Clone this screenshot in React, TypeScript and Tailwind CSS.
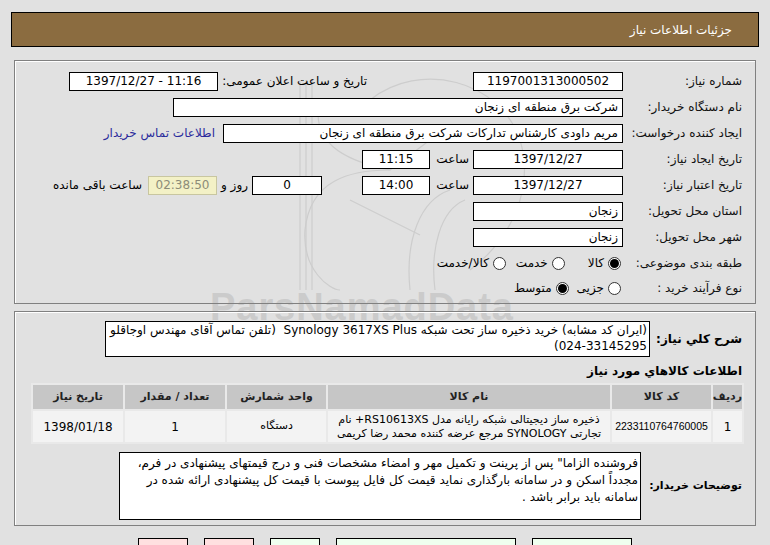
import React from 'react';

const font = "font-['Tahoma','DejaVu_Sans',sans-serif]";

const Box = ({ children, className = '' }: { children?: React.ReactNode; className?: string }) => (
  <div className={`h-[19px] border border-black bg-white flex items-center px-1 text-[12px] text-black leading-none ${className}`}>
    {children}
  </div>
);

const Label = ({ children, className = '' }: { children: React.ReactNode; className?: string }) => (
  <div className={`w-[119px] shrink-0 whitespace-nowrap text-[12px] text-[#111] ${className}`}>{children}</div>
);

const Radio = ({ checked }: { checked?: boolean }) => (
  <span className="w-[13px] h-[13px] rounded-full border border-[#333] bg-white flex items-center justify-center shrink-0">
    {checked && <span className="w-[9px] h-[9px] rounded-full bg-black" />}
  </span>
);

// faint logo watermark drawn over the page
const Watermark = () => (
  <div aria-hidden className="absolute inset-0 pointer-events-none select-none">
    <svg className="absolute left-[190px] top-[40px]" width="400" height="300" viewBox="0 0 400 300" fill="none" stroke="#cdcdcd" strokeWidth="1.2">
      <path d="M110 40 L110 250 M116 40 L116 250 M122 40 L122 250" />
      <path d="M130 60 C 120 100, 150 120, 200 130 L 240 100" />
      <path d="M200 130 C 160 130, 120 140, 115 190 C 112 230, 140 250, 150 250" />
      <path d="M180 60 C 230 20, 310 40, 330 100 C 345 150, 320 200, 280 230" />
      <path d="M260 150 C 230 160, 215 200, 220 250" />
      <path d="M275 160 C 250 170, 240 210, 245 250" />
      <path d="M160 160 L 230 195" />
    </svg>
    <div className="absolute left-[210px] top-[288px] text-[38px] font-bold text-[#cbcbcb] font-['Liberation_Sans',sans-serif] tracking-wide leading-none">
      ParsNamadData
    </div>
  </div>
);

export default function App() {
  return (
    <div dir="rtl" className={`relative w-[770px] h-[545px] overflow-hidden bg-[#e1e1e1] ${font}`}>
      <Watermark />

      <div className="relative pt-[12px] px-[11px]">
        <div className="h-[35px] bg-[#8b6c40] border border-black flex items-center pr-[26px] text-[12px] text-white">
          جزئیات اطلاعات نیاز
        </div>
      </div>

      {/* panel 1 */}
      <div className="relative mx-[14px] mt-[13px] border border-[#808080] shadow-[inset_1px_1px_0_#fff] pr-[13px] pt-[7px] pb-[3px]">
        <div className="flex items-center h-[26px]">
          <Label>شماره نیاز:</Label>
          <Box className="w-[150px] justify-center">1197001313000502</Box>
          <div className="w-[106px]" />
          <div className="w-[149px] text-[12px] whitespace-nowrap">تاریخ و ساعت اعلان عمومی:</div>
          <Box className="w-[149px] justify-center">
            <span dir="ltr">1397/12/27 - 11:16</span>
          </Box>
        </div>
        <div className="flex items-center h-[26px]">
          <Label>نام دستگاه خریدار:</Label>
          <Box className="w-[450px]">شرکت برق منطقه ای زنجان</Box>
        </div>
        <div className="flex items-center h-[26px]">
          <Label>ایجاد کننده درخواست:</Label>
          <Box className="w-[400px]">مریم داودی کارشناس تدارکات شرکت برق منطقه ای زنجان</Box>
          <div className="pr-[8px] text-[12px] text-[#2b2b9c] whitespace-nowrap">اطلاعات تماس خریدار</div>
        </div>
        <div className="flex items-center h-[26px]">
          <Label>تاریخ ایجاد نیاز:</Label>
          <Box className="w-[150px] justify-center">1397/12/27</Box>
          <div className="w-[43px] pr-[4px] text-[12px]">ساعت</div>
          <Box className="w-[68px] justify-center">11:15</Box>
        </div>
        <div className="flex items-center h-[26px]">
          <Label>تاریخ اعتبار نیاز:</Label>
          <Box className="w-[150px] justify-center">1397/12/27</Box>
          <div className="w-[43px] pr-[4px] text-[12px]">ساعت</div>
          <Box className="w-[68px] justify-center">14:00</Box>
          <div className="w-[40px]" />
          <Box className="w-[70px] justify-center">0</Box>
          <div className="w-[35px] pr-[4px] text-[12px] whitespace-nowrap">روز و</div>
          <div className="w-[69px] h-[19px] flex items-center justify-center border border-[#c8c6a0] bg-[#f3f1c6] text-[12px] text-[#8c8c78]">
            02:38:50
          </div>
          <div className="pr-[6px] text-[12px] whitespace-nowrap">ساعت باقی مانده</div>
        </div>
        <div className="flex items-center h-[26px]">
          <Label>استان محل تحویل:</Label>
          <Box className="w-[150px] text-[11px]">زنجان</Box>
        </div>
        <div className="flex items-center h-[26px]">
          <Label>شهر محل تحویل:</Label>
          <Box className="w-[150px] text-[11px]">زنجان</Box>
        </div>
        <div className="flex items-center h-[26px] text-[12px]">
          <Label>طبقه بندی موضوعی:</Label>
          <div className="flex items-center gap-[4px] pr-[2px]">
            <Radio checked />
            <span>کالا</span>
          </div>
          <div className="flex items-center gap-[4px] pr-[23px]">
            <Radio />
            <span>خدمت</span>
          </div>
          <div className="flex items-center gap-[4px] pr-[10px]">
            <Radio />
            <span>کالا/خدمت</span>
          </div>
        </div>
        <div className="flex items-center h-[24px] text-[12px]">
          <Label>نوع فرآیند خرید :</Label>
          <div className="flex items-center gap-[4px] pr-[2px]">
            <Radio />
            <span>جزیی</span>
          </div>
          <div className="flex items-center gap-[4px] pr-[8px]">
            <Radio checked />
            <span>متوسط</span>
          </div>
        </div>
      </div>

      {/* panel 2 */}
      <div className="relative mx-[14px] mt-[7px] border border-[#808080] shadow-[inset_1px_1px_0_#fff] pr-[13px] pl-[15px] pt-[9px] pb-[5px]">
        <div className="flex items-center">
          <div className="w-[92px] shrink-0 whitespace-nowrap text-[12px] font-bold">شرح کلي نیاز:</div>
          <div className="w-[545px] h-[36px] border border-black bg-white px-[2px] text-[12px] leading-[16px]">
            (ایران کد مشابه) خرید ذخیره ساز تحت شبکه Synology 3617XS Plus &nbsp;(تلفن تماس آقای مهندس اوجاقلو{' '}
            <span dir="ltr" className="[unicode-bidi:isolate]">024-33145295</span>)
          </div>
        </div>
        <div className="h-[28px] flex items-center text-[12px] font-bold">اطلاعات کالاهاي مورد نیاز</div>
        <table className="table-fixed w-[713px] border-separate border-spacing-[2px] bg-[#e9e9e9] text-[11px] -mr-[2px] -mt-[2px]">
          <thead>
            <tr className="bg-[#c6c6c6] h-[24px] text-[11px] text-[#222]">
              <th className="w-[29px] font-bold">ردیف</th>
              <th className="w-[99px] font-bold">کد کالا</th>
              <th className="w-[282px] font-bold">نام کالا</th>
              <th className="w-[99px] font-bold">واحد شمارش</th>
              <th className="w-[100px] font-bold">تعداد / مقدار</th>
              <th className="w-[90px] font-bold">تاریخ نیاز</th>
            </tr>
          </thead>
          <tbody>
            <tr className="bg-[#f3f3f3] h-[31px] text-center">
              <td className="text-[12px]">1</td>
              <td className="text-[10.5px] font-['Liberation_Sans',sans-serif]">2233110764760005</td>
              <td className="leading-[14px]">
                ذخیره ساز دیجیتالی شبکه رایانه مدل RS10613XS+ نام
                <br />
                تجارتی SYNOLOGY مرجع عرضه کننده محمد رضا کریمی
              </td>
              <td>دستگاه</td>
              <td className="text-[12px]">1</td>
              <td className="text-[12px]">1398/01/18</td>
            </tr>
          </tbody>
        </table>
        <div className="flex items-center mt-[8px]">
          <div className="w-[101px] shrink-0 whitespace-nowrap text-[11px] font-bold">توضیحات خریدار:</div>
          <div className="w-[522px] h-[68px] border border-black bg-white px-[2px] pt-[2px] text-[12px] leading-[17px]">
            فروشنده الزاما" پس از پرینت و تکمیل مهر و امضاء مشخصات فنی و درج قیمتهای پیشنهادی در فرم،
            مجدداً اسکن و در سامانه بارگذاری نماید قیمت کل فایل پیوست با قیمت کل پیشنهادی ارائه شده در
            سامانه باید برابر باشد .
          </div>
        </div>
      </div>

      {/* buttons */}
      <div dir="ltr" className="relative flex pl-[138px] mt-[12px] gap-[16px]">
        <div className="w-[50px] h-[24px] border border-black bg-[#ffe0e0]" />
        <div className="w-[50px] h-[24px] border border-black bg-[#ffe0e0]" />
        <div className="w-[50px] h-[24px] border border-black bg-[#efffef]" />
        <div className="w-[180px] h-[24px] border border-black bg-[#efffef]" />
        <div className="w-[100px] h-[24px] border border-black bg-[#efffef]" />
      </div>
    </div>
  );
}
